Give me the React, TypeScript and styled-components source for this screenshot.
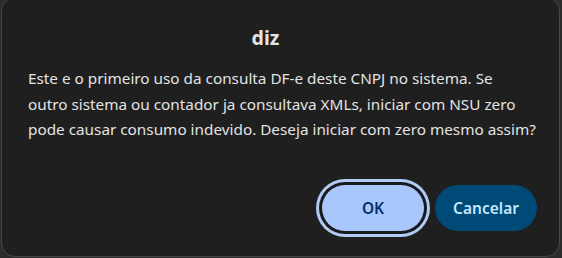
import React from "react";
import styled, { createGlobalStyle } from "styled-components";

const Global = createGlobalStyle`
  html, body {
    margin: 0;
    padding: 0;
    background: #2c2c2c;
    overflow: hidden;
  }
  body {
    width: 562px;
    height: 258px;
    font-family: "Noto Sans", "Open Sans", sans-serif;
  }
`;

const Dialog = styled.div`
  box-sizing: border-box;
  margin: -3px 0 0 1px;
  width: 559px;
  height: 260px;
  border: 1px solid #474747;
  border-radius: 14px;
  background: #1f1f1f;
  display: flex;
  flex-direction: column;
  padding: 28px 22px 25px 26px;
`;

const Title = styled.h1`
  margin: 0;
  padding-right: 34px;
  text-align: center;
  font-size: 19.5px;
  line-height: 24px;
  font-weight: 700;
  color: #e3e3e3;
`;

const Message = styled.p`
  margin: 16px 0 0;
  font-size: 15.3px;
  line-height: 25.5px;
  color: #e3e3e3;
  white-space: nowrap;
`;

const Actions = styled.div`
  margin-top: auto;
  display: flex;
  justify-content: flex-end;
  gap: 11px;
`;

const Button = styled.button<{ $primary?: boolean }>`
  box-sizing: border-box;
  height: 46px;
  min-width: 102px;
  padding: 0 18px;
  border: none;
  border-radius: 23px;
  font-family: "Noto Sans", "Open Sans", sans-serif;
  font-size: 15.5px;
  font-weight: 600;
  cursor: pointer;
  background: ${(p) => (p.$primary ? "#a8c7fa" : "#004a77")};
  color: ${(p) => (p.$primary ? "#062e6f" : "#c2e7ff")};
  box-shadow: ${(p) =>
    p.$primary ? "0 0 0 3px #181a1f, 0 0 0 6px #b2cbf2" : "none"};
`;

export default function App() {
  return (
    <>
      <Global />
      <Dialog role="alertdialog">
        <Title>diz</Title>
        <Message>
          Este e o primeiro uso da consulta DF-e deste CNPJ no sistema. Se
          <br />
          outro sistema ou contador ja consultava XMLs, iniciar com NSU zero
          <br />
          pode causar consumo indevido. Deseja iniciar com zero mesmo assim?
        </Message>
        <Actions>
          <Button $primary>OK</Button>
          <Button>Cancelar</Button>
        </Actions>
      </Dialog>
    </>
  );
}
